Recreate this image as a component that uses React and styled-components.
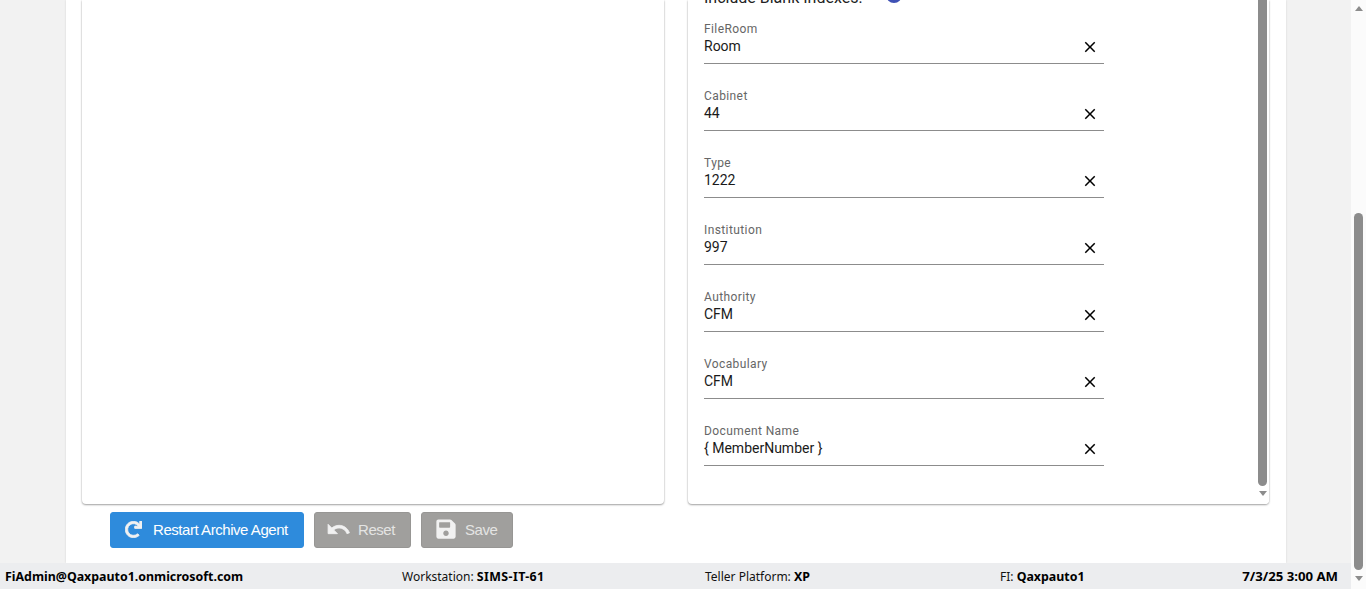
import React from "react";
import styled, { createGlobalStyle } from "styled-components";
import { FaRedo, FaSave } from "react-icons/fa";
import { MdClose } from "react-icons/md";

const GlobalStyle = createGlobalStyle`
  html, body {
    margin: 0;
    height: 100%;
    overflow: hidden;
  }
  body {
    font-family: Roboto, "Liberation Sans", sans-serif;
    background: #f2f2f2;
  }
  * {
    box-sizing: border-box;
  }
`;

const Window = styled.div`
  display: flex;
  width: 1366px;
  height: 589px;
  overflow: hidden;
`;

const Page = styled.div`
  flex: 1;
  min-width: 0;
  display: flex;
  flex-direction: column;
`;

const Gutter = styled.div`
  flex: 1;
  min-height: 0;
  padding: 0 65px 0 66px;
  background: #f2f2f2;
`;

const Sheet = styled.main`
  height: 100%;
  padding: 0 17px 0 16px;
  background: #fff;
  box-shadow: 0 0 2px rgba(0, 0, 0, 0.12);
`;

const Cards = styled.div`
  display: flex;
  gap: 24px;
  height: 504px;
`;

const Card = styled.section`
  position: relative;
  flex: ${(p) => p.$flex};
  background: #fff;
  border-radius: 0 0 4px 4px;
  overflow: hidden;
  box-shadow: 0 1px 2px rgba(0, 0, 0, 0.35), 0 0 2px rgba(0, 0, 0, 0.12);
`;

const FormBody = styled.div`
  display: flex;
  flex-direction: column;
  gap: 25px;
  margin-top: -12px;
  padding-left: 16px;
`;

const BlankRow = styled.div`
  display: flex;
  align-items: center;
  gap: 24px;
  height: 24px;
  color: #222;
  font-size: 16px;
  margin-top: -3px;
  margin-bottom: -12px;
`;

const BlankDot = styled.span`
  width: 16px;
  height: 16px;
  border-radius: 50%;
  background: #3f51b5;
  margin-top: -5px;
`;

const Field = styled.div`
  width: 400px;
  height: 42px;
  display: flex;
  flex-direction: column;
  border-bottom: 1px solid #8c8c8c;
`;

const FieldLabel = styled.label`
  color: #666;
  font-size: 12px;
  line-height: 14px;
  letter-spacing: 0.4px;
`;

const FieldRow = styled.div`
  display: flex;
  align-items: center;
  justify-content: space-between;
  height: 22px;
  margin-top: -1px;
  padding-right: 5px;
  color: #1a1a1a;
  font-size: 14px;
`;

const ClearButton = styled.span`
  display: flex;
  color: #000;
  font-size: 18px;
  margin-top: 1px;
`;

const Actions = styled.div`
  display: flex;
  gap: 10px;
  padding: 8px 0 0 28px;
`;

const Button = styled.button`
  display: flex;
  align-items: center;
  gap: ${(p) => p.$gap}px;
  height: 36px;
  width: ${(p) => p.$width}px;
  padding: 0 0 2px ${(p) => p.$pad}px;
  border: 1px solid ${(p) => (p.$primary ? "#2e8bdc" : "#979694")};
  border-radius: 3px;
  background: ${(p) => (p.$primary ? "#2e8bdc" : "#a09f9d")};
  color: ${(p) => (p.$primary ? "#fff" : "#e4e4e3")};
  font-family: "Liberation Sans", Arial, sans-serif;
  font-size: 15px;
  letter-spacing: -0.45px;
  white-space: nowrap;
  svg {
    flex-shrink: 0;
    color: #f1f1f1;
  }
`;

const StatusBar = styled.footer`
  height: 26px;
  display: grid;
  grid-template-columns: 397px 303px 295px 1fr;
  align-items: center;
  padding: 0 13px 0 5px;
  background: #ecedef;
  color: #111;
  font-family: "Noto Sans", "Open Sans", sans-serif;
  font-size: 12px;
  b {
    font-size: 12.4px;
    font-weight: 700;
    color: #000;
  }
`;

const StatusCell = styled.div`
  white-space: nowrap;
`;

const WideValue = styled.b`
  letter-spacing: 0.4px;
`;

const FiCell = styled.div`
  display: flex;
  align-items: center;
  justify-content: space-between;
  white-space: pre;
`;

const DateText = styled.b`
  && {
    font-size: 13.2px;
  }
`;

const Track = styled.div`
  display: flex;
  flex-direction: column;
  align-items: center;
  background: ${(p) => p.$bg};
`;

const PageTrack = styled(Track)`
  width: 15px;
  flex-shrink: 0;
  height: 589px;
`;

const CardTrack = styled(Track)`
  position: absolute;
  top: 0;
  bottom: 0;
  right: 0;
  width: 13px;
`;

const Spacer = styled.div`
  height: ${(p) => p.$h}px;
  flex-shrink: 0;
`;

const Thumb = styled.div`
  width: 9px;
  height: ${(p) => p.$h}px;
  flex-shrink: 0;
  background: #8c8c8c;
  border-radius: ${(p) => p.$radius};
`;

const Arrow = styled.div`
  width: 0;
  height: 0;
  border-left: 4.5px solid transparent;
  border-right: 4.5px solid transparent;
  ${(p) => (p.$up ? "border-bottom" : "border-top")}: 5px solid #8c8c8c;
`;

const UndoIcon = () => (
  <svg width="25" height="25" viewBox="0 0 24 24" fill="currentColor" stroke="currentColor" strokeWidth="0.8">
    <path d="M12.5 8c-2.65 0-5.05.99-6.9 2.6L2 7v9h9l-3.62-3.62c1.39-1.16 3.16-1.88 5.12-1.88 3.54 0 6.55 2.31 7.6 5.5l2.37-.78C21.08 11.03 17.15 8 12.5 8z" />
  </svg>
);

const fields = [
  ["FileRoom", "Room"],
  ["Cabinet", "44"],
  ["Type", "1222"],
  ["Institution", "997"],
  ["Authority", "CFM"],
  ["Vocabulary", "CFM"],
  ["Document Name", "{ MemberNumber }"],
];

export default function App() {
  return (
    <Window>
      <GlobalStyle />
      <Page>
        <Gutter>
          <Sheet>
            <Cards>
              <Card $flex="0 0 582px" />
              <Card $flex="0 0 581px">
                <FormBody>
                  <BlankRow>
                    Include Blank Indexes:
                    <BlankDot />
                  </BlankRow>
                  {fields.map(([label, value]) => (
                    <Field key={label}>
                      <FieldLabel>{label}</FieldLabel>
                      <FieldRow>
                        {value}
                        <ClearButton>
                          <MdClose />
                        </ClearButton>
                      </FieldRow>
                    </Field>
                  ))}
                </FormBody>
                <CardTrack $bg="#fff">
                  <Thumb $h={486} $radius="0 0 5px 5px" />
                  <Spacer $h={5} />
                  <Arrow />
                </CardTrack>
              </Card>
            </Cards>
            <Actions>
              <Button $primary $width={194} $pad={14} $gap={11}>
                <FaRedo size={17} stroke="currentColor" strokeWidth={24} />
                Restart Archive Agent
              </Button>
              <Button $width={97} $pad={11} $gap={7}>
                <UndoIcon />
                Reset
              </Button>
              <Button $width={92} $pad={13} $gap={8}>
                <FaSave size={22} />
                Save
              </Button>
            </Actions>
          </Sheet>
        </Gutter>
        <StatusBar>
          <StatusCell>
            <b>FiAdmin@Qaxpauto1.onmicrosoft.com</b>
          </StatusCell>
          <StatusCell>
            Workstation: <WideValue>SIMS-IT-61</WideValue>
          </StatusCell>
          <StatusCell>
            Teller Platform: <b>XP</b>
          </StatusCell>
          <FiCell>
            <span>
              FI: <b>Qaxpauto1</b>
            </span>
            <DateText>7/3/25 3:00 AM</DateText>
          </FiCell>
        </StatusBar>
      </Page>
      <PageTrack $bg="#fbfbfb">
        <Spacer $h={6} />
        <Arrow $up />
        <Spacer $h={202} />
        <Thumb $h={357} $radius="5px" />
        <Spacer $h={6} />
        <Arrow />
      </PageTrack>
    </Window>
  );
}
